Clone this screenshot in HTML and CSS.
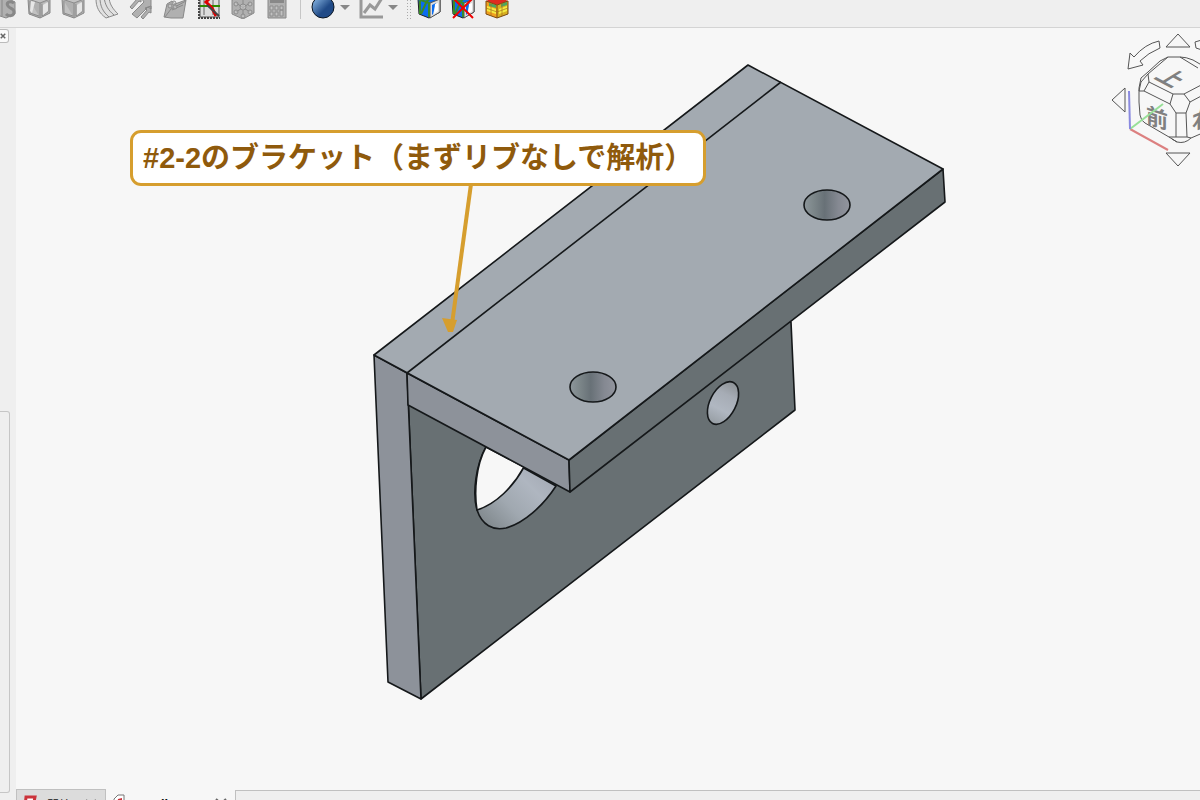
FILE: index.html
```
<!DOCTYPE html>
<html lang="ja">
<head>
    <meta charset="UTF-8">
    <meta name="viewport" content="width=device-width, initial-scale=1.0">
    <title>ブラケットの解析</title>
    <link rel="stylesheet" href="styles.css">
</head>
<body>
    <svg class="symbols" aria-hidden="true">
        <symbol id="gray-cube" viewBox="0 0 24 24"><path class="gray" d="M1 4l12-3 10 3v14l-10 5-11-4z"/><path class="pale-line" d="M1 4l12 4 10-4M13 8v15M3 6v12l9 3M15 9v12l6-4V6"/></symbol>
        <symbol id="blue-cube" viewBox="0 0 24 24"><path fill="#0a6cf0" stroke="#222" d="M1 4l12-3 10 3v13l-11 6-10-4z"/><path fill="#ddd" stroke="#555" d="M13 8l10-4v13l-10 6z"/><path fill="#0a6cf0" d="M15 10l4-2-3 11-1 1z"/><path fill="#fff" d="M18 9l3-1v8l-4 3z"/><path fill="none" stroke="#3b8a28" stroke-width="2" d="M1 4l11 4v14M3 6v13M9 8L4 19M15 2L9 7"/></symbol>
    </svg>

    <div class="toolbar">
        <button class="tool" aria-label="Shell thickness">
            <svg class="icon" viewBox="0 0 24 24"><path class="gray" d="M1 3h13l8 4v12l-9 4L1 19z"/><path class="sketch thick" d="M21 8c-5-3-8 0-6 3s6 2 6 6-5 5-8 2"/><path class="sketch" d="M4 4v15M9 4v17"/></svg>
        </button>
        <button class="tool" aria-label="Element geometry">
            <svg class="icon" viewBox="0 0 24 24"><use href="#gray-cube"/><path class="pale" d="M4 6l4 1-3 11-2-2zM16 10l5-3v9l-5 4z"/></svg>
        </button>
        <button class="tool" aria-label="Solid material">
            <svg class="icon" viewBox="0 0 24 24"><use href="#gray-cube"/><path class="pale" d="M16 10l5-3v9l-5 4z"/></svg>
        </button>
        <button class="tool" aria-label="Fluid section">
            <svg class="icon" viewBox="0 0 24 24"><path class="pale-line" d="M1 4l13-3c0 8 4 13 9 18l-12 4C4 18 1 12 1 4z"/><path class="sketch" d="M5 3c0 8 3 14 9 19M9 2c1 8 4 13 10 18"/></svg>
        </button>
        <button class="tool" aria-label="Force load">
            <svg class="icon" viewBox="0 0 24 24"><path class="gray" d="M3 19L15 7l-2-3h9v10l-3-2L8 23zM1 12l7-8-2-1 6-2v6l-2-1-7 8zM12 22l6-7-2-2 6-2v7l-2-1-6 7z"/></svg>
        </button>
        <button class="tool" aria-label="Material editor">
            <svg class="icon" viewBox="0 0 24 24"><path class="gray" d="M1 22l3-13 5-3 3 3 11-4-3 18H8z"/><path class="sketch" d="M2 22l6-8 15-8M9 15l11-5"/><g class="pale-line"><circle cx="7" cy="11" r="2"/><circle cx="11" cy="8" r="2"/><circle cx="12" cy="12" r="2"/></g></svg>
        </button>
        <button class="tool" aria-label="Mesh from shape">
            <svg class="icon" viewBox="0 0 24 24"><path fill="#ddd" stroke="#555" d="M3 1h19v21H3z"/><path fill="none" stroke="#444" stroke-width="2" stroke-dasharray="2 1" d="M2 1v22h21"/><path fill="none" stroke="#666" stroke-width="1" d="M7 2v18M16 2v18"/><path stroke="#2d8a00" stroke-width="2" d="M3 11h20"/><path fill="none" stroke="#e00000" stroke-width="3" d="M13 3l-4 4 6 6 4 8"/><path stroke="#444" stroke-width="2" d="M10 10l12 11"/></svg>
        </button>
        <button class="tool" aria-label="Solver">
            <svg class="icon" viewBox="0 0 24 24"><path class="gray" d="M1 5l11-4 11 4v13l-11 6-11-5z"/><path class="sketch" d="M12 4v17M5 8l14 9M19 8L5 17"/><g class="pale-line"><circle cx="12" cy="12" r="3"/><circle cx="5" cy="9" r="2"/><circle cx="19" cy="9" r="2"/><circle cx="5" cy="17" r="2"/><circle cx="19" cy="17" r="2"/><circle cx="12" cy="21" r="2"/></g></svg>
        </button>
        <button class="tool" aria-label="Run solver">
            <svg class="icon" viewBox="0 0 24 24"><path class="gray" d="M3 1h18v22H3z"/><path fill="#888" d="M5 3h14v5H5z"/><path class="pale-line" d="M5 11h3v4H5zM10 11h3v4h-3zM15 11h3v4h-3zM5 17h3v4H5zM10 17h3v4h-3zM15 15h3v6h-3z"/></svg>
        </button>
        <span class="separator"></span>
        <button class="tool-menu" aria-label="Draw style">
            <svg class="icon" viewBox="0 0 24 24"><defs><linearGradient id="ball" x1="0" y1="0" x2="1" y2="1"><stop offset=".2" stop-color="#729fcf"/><stop offset=".6" stop-color="#204a87"/></linearGradient></defs><circle cx="12" cy="12" r="11" fill="url(#ball)" stroke="#0b1521"/></svg>
            <span class="caret"></span>
        </button>
        <button class="tool-menu" aria-label="Result plots">
            <svg class="icon" viewBox="0 0 24 24"><path fill="none" stroke="#999" stroke-width="3" d="M2 0v22h22M5 18l6-8 5 4 7-11"/></svg>
            <span class="caret"></span>
        </button>
        <span class="grip"></span>
        <button class="tool" aria-label="Clipping plane">
            <svg class="icon" viewBox="0 0 24 24"><use href="#blue-cube"/></svg>
        </button>
        <button class="tool" aria-label="Remove clipping planes">
            <svg class="icon" viewBox="0 0 24 24"><use href="#blue-cube"/><path stroke="#f00000" stroke-width="2" d="M2 3l20 20M22 3L2 23"/></svg>
        </button>
        <button class="tool" aria-label="Examples">
            <svg class="icon" viewBox="0 0 24 24"><path fill="#f0a020" d="M1 6l11 4v13L1 19z"/><path fill="#d8b020" d="M12 10l11-4v13l-11 4z"/><path fill="#e02a20" d="M1 6l11-5 11 5-11 4z"/><path fill="#f5ec40" d="M2 11l9 3v5l-9-3zM14 14l8-3v5l-8 3z"/><path fill="#4aa860" d="M4 8l7 2v3l-7-2zM16 9l6-2v3l-6 2z"/><path fill="none" stroke="#7a4a10" d="M1 6l11 4 11-4v13l-11 4-11-4zM12 10v13"/><path fill="none" stroke="#a5701c" stroke-opacity=".7" d="M1 13l11 4 11-4M6 8v13M17 8v13"/></svg>
        </button>
    </div>

    <div class="workspace">
        <div class="sidebar">
            <button class="close-panel" aria-label="Close panel"><svg viewBox="0 0 8 8"><path d="M1 1l6 6M7 1L1 7"/></svg></button>
            <div class="panel"></div>
        </div>

        <main class="viewport">
            <svg class="model" viewBox="0 0 1184 772">
                <defs>
                    <linearGradient id="bore"><stop offset="0" stop-color="#8d969b"/><stop offset=".2" stop-color="#7d878a"/><stop offset=".45" stop-color="#687177"/><stop offset=".75" stop-color="#858992"/><stop offset="1" stop-color="#92959e"/></linearGradient>
                    <linearGradient id="side-bore" x1="0" y1="0" x2="0" y2="1"><stop offset="0" stop-color="#8d9296"/><stop offset=".3" stop-color="#a6acb5"/><stop offset=".65" stop-color="#b0b7c1"/><stop offset="1" stop-color="#969da3"/></linearGradient>
                    <linearGradient id="big-bore" x1="0" y1="1" x2="1" y2="0"><stop offset=".05" stop-color="#7c8488"/><stop offset=".35" stop-color="#a0a8b0"/><stop offset=".6" stop-color="#afb6c0"/><stop offset="1" stop-color="#979ca7"/></linearGradient>
                </defs>
                <g class="edges" transform="translate(-16 -28)">
                    <path class="face-dark" d="M407 373L421 699L795 410L791 322z"/>
                    <!-- large hole in the upright plate -->
                    <path fill="url(#big-bore)" d="M486 447C476 465 472 493 477 510C482 525 493 531 506 528C524 523 543 506 556 486z"/>
                    <path fill="#f7f7f7" d="M486 447C476 465 474 492 477 510C496 504 513 487 524 467z"/>
                    <ellipse cx="723" cy="403" rx="13" ry="23" transform="rotate(27 723 403)" fill="url(#side-bore)"/>
                    <path class="face-end" d="M374 355L407 373L421 699L388 682z"/>
                    <path class="face-end" d="M407 373L569 460L570 492L408 405z"/>
                    <path class="face-dark" d="M569 460L943 169L945 202L570 492z"/>
                    <path class="face-top" d="M374 355L748 65L943 169L569 460z"/>
                    <path d="M407 373L781 82"/>
                    <ellipse cx="827" cy="205" rx="23" ry="15" fill="url(#bore)"/>
                    <ellipse cx="593" cy="387" rx="23" ry="15" fill="url(#bore)"/>
                </g>
                <g transform="translate(-16 -28)">
                    <path class="pointer-line" d="M471 184L452 324"/>
                    <path class="pointer-head" d="M442 318L457 320L453 332L448 332z"/>
                </g>
            </svg>

            <p class="callout">#2-2のブラケット（まずリブなしで解析）</p>

            <svg class="nav-cube" viewBox="0 0 90 140">
                <path d="M56 17L68 4L80 17zM2 70L15 58V82zM56 123H80L68 136z"/>
                <path d="M49 11L50 18Q38 23 30 31L33 35L18 39L20 23L24 27Q35 14 49 11zM95 9L85 12L86 18L95 21"/>
                <path d="M95 37L83 30Q76 27 70 27H58L50 31L38 42L31 48L29 58V72L30 85Q31 91 35 93L59 107L67 112Q75 114 81 108L95 102"/>
                <path d="M70 27L88 38M58 27L38 44L39 52L63 64H74L95 53M38 44L31 52L29 61L34 61L39 52M34 61L60 74L63 64M60 74L66 83H76L80 72L74 64M80 72L95 64M66 83V107H77L76 83M59 107L66 107M62 109L67 112M77 107L81 108"/>
                <text class="cube-label" transform="translate(61 48) rotate(28) skewX(-30)" x="-11" y="8">上</text>
                <text class="cube-label" transform="translate(47 87) skewY(18)" x="-11" y="9">前</text>
                <text class="cube-label" transform="translate(93 87) skewY(-22)" x="-11" y="9">右</text>
                <path class="axis-x" d="M20 99L58 120"/>
                <path class="axis-y" d="M20 99L53 74"/>
                <path class="axis-z" d="M20 99L19 61"/>
            </svg>

            <nav class="tabs">
                <a class="tab" href="#start">
                    <svg class="tab-icon" viewBox="0 0 14 14"><path fill="#fff" stroke="#cb333b" stroke-width="3" d="M12 2H3L2 12h8z"/><path stroke="#418fde" stroke-width="2" d="M12 5v7"/></svg>
                    <span class="tab-name">開始</span>
                    <svg class="tab-close" viewBox="0 0 12 10"><path d="M1 1l10 9M11 1L1 10"/></svg>
                </a>
                <a class="tab active" href="#model">
                    <svg class="tab-icon" viewBox="0 0 14 14"><path fill="#fff" stroke="#777" d="M2 13V5l4-4h6v12z"/><path fill="#cb333b" d="M6 5l4-1v5H5z"/></svg>
                    <span class="tab-name">small : 1</span>
                    <svg class="tab-close" viewBox="0 0 12 10"><path d="M1 1l10 9M11 1L1 10"/></svg>
                </a>
            </nav>
        </main>
    </div>
</body>
</html>
```
FILE: styles.css
```
* {
    box-sizing: border-box;
}

body {
    margin: 0;
    height: 100vh;
    display: flex;
    flex-direction: column;
    overflow: hidden;
    background: #efefef;
    color: #111;
    font-family: "Noto Sans", "Noto Sans CJK JP", sans-serif;
}

button {
    border: none;
    background: none;
    padding: 0;
}

.symbols {
    position: absolute;
    width: 0;
    height: 0;
}

/* toolbar */
.toolbar {
    flex: none;
    display: flex;
    align-items: flex-end;
    height: 28px;
    padding-bottom: 8px;
    margin-left: -12px;
    border-bottom: 1px solid #d4d4d4;
}

.tool {
    flex: none;
    display: flex;
    justify-content: center;
    width: 34px;
}

.tool-menu {
    flex: none;
    display: flex;
    align-items: center;
    gap: 5px;
    margin-right: 9px;
}

.icon {
    display: block;
    width: 24px;
    height: 24px;
}

.caret {
    border: 5px solid transparent;
    border-top-color: #888;
    border-bottom: none;
}

.separator {
    width: 1px;
    height: 24px;
    margin: 0 10px 0 6px;
    background: #c6c6c6;
}

.grip {
    width: 6px;
    height: 20px;
    margin-left: -1px;
    background: radial-gradient(circle, #aaa 1px, transparent 1px) 0 0 / 3px 3px;
}

.gray {
    fill: #b0b0b0;
    stroke: #888;
}

.pale {
    fill: #e6e6e6;
}

.pale-line {
    fill: #d4d4d4;
    fill-opacity: 0.5;
    stroke: #8c8c8c;
}

.sketch {
    fill: none;
    stroke: #888;
}

.thick {
    stroke-width: 3;
}

/* left panel */
.workspace {
    flex: 1;
    display: flex;
    min-height: 0;
}

.sidebar {
    flex: none;
    display: flex;
    flex-direction: column;
    justify-content: space-between;
    width: 16px;
    padding: 1px 6px 7px 0;
}

.close-panel {
    display: flex;
    align-items: center;
    width: 9px;
    height: 14px;
    border: 1px solid #bbb;
    border-left: none;
    border-radius: 0 3px 3px 0;
    background: #fafafa;
}

.close-panel svg {
    width: 6px;
    height: 8px;
}

.close-panel path,
.tab-close path {
    fill: none;
    stroke: #666;
    stroke-width: 2;
}

.panel {
    height: 50%;
    border: 1px solid #c6c6c6;
    border-left: none;
    border-radius: 0 3px 3px 0;
}

/* 3D view */
.viewport {
    flex: 1;
    position: relative;
    display: flex;
    flex-direction: column;
    justify-content: flex-end;
    min-width: 0;
    background: #f7f7f7;
}

.model {
    position: absolute;
    top: 0;
    left: 0;
    width: 100%;
    height: 100%;
}

.edges {
    fill: none;
    stroke: #15181a;
    stroke-width: 1.6;
    stroke-linejoin: round;
}

.face-top {
    fill: #a3aab1;
}

.face-end {
    fill: #8d929a;
}

.face-dark {
    fill: #687073;
}

.pointer-line {
    stroke: #d69e2e;
    stroke-width: 4;
}

.pointer-head {
    fill: #d69e2e;
}

.callout {
    position: absolute;
    top: 102px;
    left: 114px;
    margin: 0;
    padding: 0 10px;
    border: 3px solid #d69e2e;
    border-radius: 11px;
    background: #fff;
    color: #8f5a0c;
    font-family: "Liberation Sans", "Noto Sans CJK JP", sans-serif;
    font-size: 29px;
    font-weight: 700;
    line-height: 50px;
    white-space: nowrap;
}

.nav-cube {
    position: absolute;
    top: 2px;
    right: 0;
    width: 90px;
    height: 140px;
    fill: none;
    stroke: #555;
    stroke-width: 1;
}

.nav-cube .axis-x {
    stroke: #dc8080;
    stroke-width: 2;
}

.nav-cube .axis-y {
    stroke: #98e098;
    stroke-width: 2;
}

.nav-cube .axis-z {
    stroke: #8a8ae0;
    stroke-width: 2;
}

.cube-label {
    fill: #808080;
    stroke: none;
    font-family: "Noto Sans CJK JP", sans-serif;
    font-size: 22px;
    font-weight: 700;
}

/* document tabs */
.tabs {
    position: relative;
    display: flex;
    height: 11px;
    overflow: hidden;
}

.tabs::after {
    content: "";
    flex: 1;
    margin-top: 1px;
    border-top: 1px solid #c0c0c0;
    border-left: 1px solid #c0c0c0;
    background: #efefef;
}

.tab {
    display: flex;
    align-items: flex-start;
    height: 28px;
    padding: 5px 8px 0 6px;
    border: 1px solid #c0c0c0;
    background: #dcdcdc;
    color: #111;
    font-size: 12px;
    line-height: 18px;
    text-decoration: none;
}

.tab:first-child {
    width: 90px;
}

.tab.active {
    width: 129px;
    border: none;
    background: #f7f7f7;
    font-weight: 700;
}

.tab-icon {
    width: 14px;
    height: 14px;
    margin-right: 10px;
}

.tab-name {
    margin-top: 2px;
}

.tab-close {
    width: 12px;
    height: 10px;
    margin: 4px 0 0 auto;
}
```
